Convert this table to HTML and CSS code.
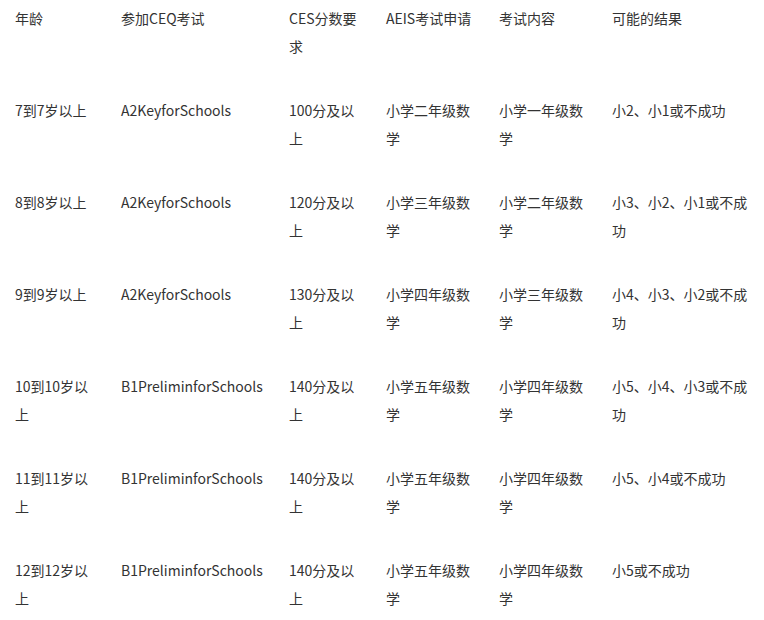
FILE: index.html
```html
<!DOCTYPE html>
<html lang="zh-CN">
<head>
<meta charset="utf-8">
<link rel="stylesheet" href="styles.css">
</head>
<body>
<table class="exam-table">
  <colgroup>
    <col class="c1"><col class="c2"><col class="c3"><col class="c4"><col class="c5"><col class="c6">
  </colgroup>
  <tr><td>年龄</td><td>参加CEQ考试</td><td>CES分数要求</td><td>AEIS考试申请</td><td>考试内容</td><td>可能的结果</td></tr>
  <tr><td>7到7岁以上</td><td>A2KeyforSchools</td><td>100分及以上</td><td>小学二年级数学</td><td>小学一年级数学</td><td>小2、小1或不成功</td></tr>
  <tr><td>8到8岁以上</td><td>A2KeyforSchools</td><td>120分及以上</td><td>小学三年级数学</td><td>小学二年级数学</td><td>小3、小2、小1或不成功</td></tr>
  <tr><td>9到9岁以上</td><td>A2KeyforSchools</td><td>130分及以上</td><td>小学四年级数学</td><td>小学三年级数学</td><td>小4、小3、小2或不成功</td></tr>
  <tr><td>10到10岁以上</td><td>B1PreliminforSchools</td><td>140分及以上</td><td>小学五年级数学</td><td>小学四年级数学</td><td>小5、小4、小3或不成功</td></tr>
  <tr><td>11到11岁以上</td><td>B1PreliminforSchools</td><td>140分及以上</td><td>小学五年级数学</td><td>小学四年级数学</td><td>小5、小4或不成功</td></tr>
  <tr><td>12到12岁以上</td><td>B1PreliminforSchools</td><td>140分及以上</td><td>小学五年级数学</td><td>小学四年级数学</td><td>小5或不成功</td></tr>
</table>
</body>
</html>
```

FILE: styles.css
```css
html, body {
  margin: 0;
  padding: 0;
  background: #ffffff;
}
body {
  padding: 4px 0 0 15px;
  font-family: "Noto Sans CJK SC", "Noto Sans", sans-serif;
  font-size: 14px;
  line-height: 28px;
  color: #333333;
}
.exam-table {
  border-collapse: collapse;
  table-layout: fixed;
  width: 739px;
}
.exam-table td {
  padding: 0 20px 36px 0;
  vertical-align: top;
  word-break: break-all;
}
.exam-table td:last-child {
  padding-right: 0;
}
.c1 { width: 106px; }
.c2 { width: 168px; }
.c3 { width: 97px; }
.c4 { width: 113px; }
.c5 { width: 113px; }
.c6 { width: 142px; }
```
